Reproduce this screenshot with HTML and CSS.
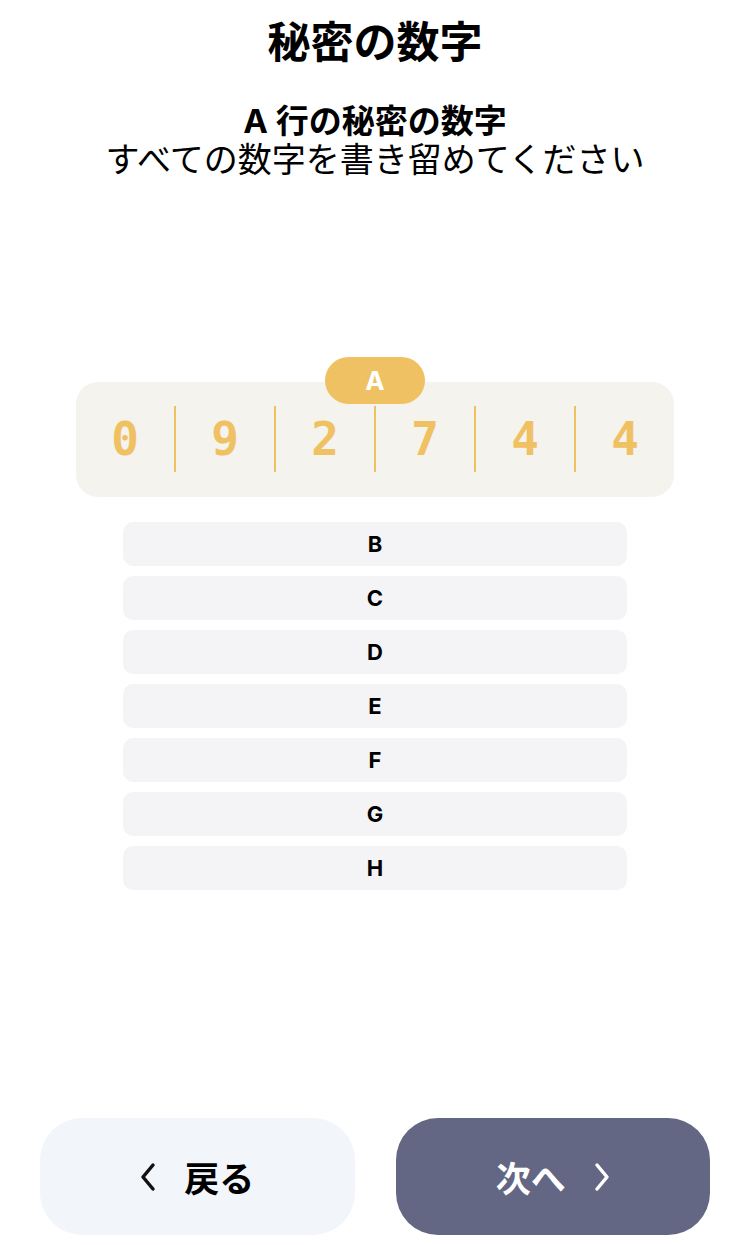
FILE: index.html
```html
<!DOCTYPE html>
<html lang="ja">
<head>
<meta charset="utf-8">
<link rel="stylesheet" href="styles.css">
</head>
<body>
<div class="page">
  <h1 class="title">秘密の数字</h1>
  <div class="sub1">A 行の秘密の数字</div>
  <div class="sub2">すべての数字を書き留めてください</div>

  <div class="card">
    <div class="badge">A</div>
    <div class="digits">
      <div class="cell">0</div>
      <div class="cell sep">9</div>
      <div class="cell sep">2</div>
      <div class="cell sep">7</div>
      <div class="cell sep">4</div>
      <div class="cell sep">4</div>
    </div>
  </div>

  <div class="rows">
    <div class="row">B</div>
    <div class="row">C</div>
    <div class="row">D</div>
    <div class="row">E</div>
    <div class="row">F</div>
    <div class="row">G</div>
    <div class="row">H</div>
  </div>

  <div class="footer">
    <button class="btn back">
      <svg class="chev" width="18" height="30" viewBox="0 0 18 30"><polyline points="13,3 3,15 13,27" fill="none" stroke="#111" stroke-width="3.5" stroke-linecap="round" stroke-linejoin="round"/></svg>
      <span>戻る</span>
    </button>
    <button class="btn next">
      <span>次へ</span>
      <svg class="chev" width="18" height="30" viewBox="0 0 18 30"><polyline points="5,3 15,15 5,27" fill="none" stroke="#fff" stroke-width="3.5" stroke-linecap="round" stroke-linejoin="round"/></svg>
    </button>
  </div>
</div>
</body>
</html>
```

FILE: styles.css
```css
html, body {
  margin: 0;
  padding: 0;
  background: #fff;
}
body {
  font-family: "Inter", "Noto Sans CJK JP", sans-serif;
  color: #000;
}
.page {
  width: 750px;
  height: 1245px;
  display: flex;
  flex-direction: column;
  align-items: center;
  box-sizing: border-box;
}
.title {
  margin: 14px 0 0;
  font-size: 43px;
  line-height: 56px;
  font-weight: 700;
}
.sub1 {
  margin-top: 32px;
  font-size: 33px;
  line-height: 38px;
  font-weight: 700;
}
.sub2 {
  font-size: 34px;
  line-height: 40px;
  font-weight: 400;
}
.card {
  position: relative;
  margin-top: 202px;
  width: 598px;
  height: 115px;
  background: #f4f3ee;
  border-radius: 22px;
  box-sizing: border-box;
  padding: 24px 0 25px;
}
.badge {
  position: absolute;
  top: -25px;
  left: 50%;
  transform: translateX(-50%);
  width: 100px;
  height: 47px;
  border-radius: 24px;
  background: #f0c163;
  color: #fff;
  font-weight: 700;
  font-size: 26px;
  line-height: 47px;
  text-align: center;
}
.digits {
  display: flex;
  height: 66px;
}
.cell {
  flex: 1;
  display: flex;
  align-items: center;
  justify-content: center;
  font-family: "DejaVu Sans Mono", monospace;
  font-weight: 700;
  font-size: 46px;
  color: #f0c163;
}
.cell.sep {
  border-left: 2px solid #f0c163;
}
.rows {
  margin-top: 25px;
  display: flex;
  flex-direction: column;
  gap: 10px;
}
.row {
  width: 504px;
  height: 44px;
  border-radius: 10px;
  background: #f4f4f6;
  display: flex;
  align-items: center;
  justify-content: center;
  font-weight: 700;
  font-size: 22px;
}
.footer {
  margin-top: auto;
  margin-bottom: 10px;
  width: 100%;
  box-sizing: border-box;
  padding: 0 40px;
  display: flex;
  gap: 41px;
}
.btn {
  flex: 1;
  height: 117px;
  border: none;
  border-radius: 42px;
  display: flex;
  align-items: center;
  justify-content: center;
  gap: 26px;
  font-family: "Noto Sans CJK JP", sans-serif;
  font-weight: 700;
  font-size: 35px;
  padding: 0;
}
.back {
  background: #f2f5fa;
  color: #000;
}
.next {
  background: #636783;
  color: #fff;
}
.chev {
  display: block;
}
```
